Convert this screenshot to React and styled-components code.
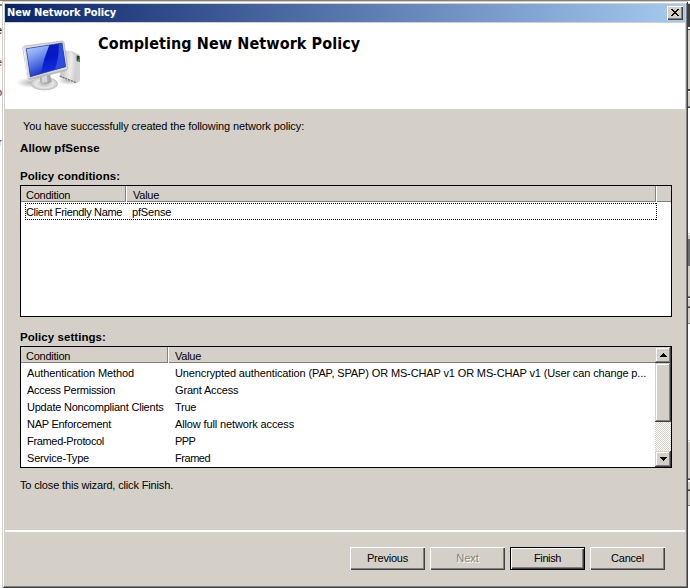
import React from 'react';
import styled, { createGlobalStyle, css } from 'styled-components';

const face = '#d4d0c8';
const shadow = '#808080';
const darkShadow = '#404040';

const GlobalStyle = createGlobalStyle`
  *, *::before, *::after { box-sizing: border-box; }
  body {
    margin: 0;
    overflow: hidden;
    font: 11px/17px 'Liberation Sans', Arial, sans-serif;
    color: #000;
  }
`;

const raised = css`
  background: ${face};
  box-shadow: inset 1px 1px 0 #fff, inset -1px -1px 0 ${darkShadow}, inset -2px -2px 0 ${shadow};
`;

const Desktop = styled.div`
  display: grid;
  grid-template-columns: 2px 686px 2px;
  width: 690px;
  height: 588px;
  border-top: 1px solid ${shadow};
  background: #fff;
`;

const LeftEdge = styled.div`
  display: flex;
  flex-direction: column;
  width: 2px;
  overflow: hidden;
  background: linear-gradient(#fff 3px, ${shadow} 3px 5px, #fff 5px);
`;

const Fragment = styled.span`
  display: flex;
  justify-content: flex-end;
  width: 2px;
  height: 17px;
  margin-top: ${(p) => p.$gap}px;
  color: ${(p) => p.$color};
`;

const RightEdge = styled.div`
  background: linear-gradient(
    #fff 2px, ${face} 2px 3px, ${darkShadow} 3px 26px, #fff 26px 28px, ${darkShadow} 28px 29px,
    ${face} 29px 88px, ${darkShadow} 88px 90px, #fff 90px 91px, ${face} 91px 105px, ${shadow} 105px 106px,
    ${darkShadow} 106px 107px, #fff 107px 232px, ${face} 232px 233px, #fff 233px 234px, ${face} 234px 238px,
    #6e6e6e 238px 265px, ${face} 265px 295px, ${shadow} 295px 296px, ${darkShadow} 296px 297px,
    #fff 297px 298px, ${face} 298px 305px, ${shadow} 305px 306px, ${darkShadow} 306px 307px,
    ${face} 307px 322px, ${shadow} 322px 323px, #fff 323px 439px, ${face} 439px 440px, #fff 440px 441px,
    ${face} 441px 477px, ${shadow} 477px 478px, ${darkShadow} 478px 479px, #fff 479px 481px,
    ${face} 481px 488px, ${shadow} 488px 489px, ${darkShadow} 489px 490px, ${face} 490px 504px,
    ${shadow} 504px 505px, #fff 505px
  );
`;

const Dialog = styled.section`
  display: flex;
  flex-direction: column;
  height: 587px;
  padding: 3px;
  background: ${face};
  box-shadow: inset 1px 1px 0 ${face}, inset -1px -1px 0 ${darkShadow},
    inset 2px 2px 0 #fff, inset -2px -2px 0 ${shadow};
`;

const TitleBar = styled.header`
  display: flex;
  align-items: center;
  justify-content: space-between;
  height: 18px;
  margin-bottom: 1px;
  padding: 0 2px;
  background: linear-gradient(90deg, #0a246a, #a6caf0);
`;

const Title = styled.h1`
  margin: 0;
  color: #fff;
  font: bold 11px/18px 'DejaVu Sans Condensed', 'DejaVu Sans', sans-serif;
  font-stretch: condensed;
  letter-spacing: -0.12px;
`;

const CloseButton = styled.button`
  ${raised}
  display: flex;
  width: 16px;
  height: 14px;
  padding: 3px 4px;
  border: 0;
`;

const Banner = styled.div`
  display: flex;
  height: 86px;
  padding: 11px 0 0 5px;
  background: #fff;
`;

const Heading = styled.h2`
  margin: 0 0 0 8px;
  font: bold 16px/19px 'DejaVu Sans Condensed', 'DejaVu Sans', sans-serif;
  font-stretch: condensed;
  letter-spacing: 0.09px;
`;

const Content = styled.main`
  display: flex;
  flex-direction: column;
  flex: 1;
  padding: 9px 13px 0 15px;
`;

const Line = styled.p`
  margin: ${(p) => p.$gap || 0}px 0 0 ${(p) => p.$indent || 0}px;
  font-weight: ${(p) => (p.$bold ? 'bold' : 'normal')};
  font-size: ${(p) => (p.$bold ? 11.5 : 11)}px;
  letter-spacing: ${(p) => p.$track || 0}px;
  white-space: nowrap;
`;

const List = styled.div`
  display: flex;
  width: 652px;
  height: ${(p) => p.$height}px;
  border: 1px solid #000;
  background: #fff;
`;

const ListBody = styled.div`
  flex: 1;
  min-width: 0;
`;

const ColumnRow = styled.div`
  display: flex;
  height: 16px;
`;

const Column = styled.div`
  width: ${(p) => p.$width}px;
  padding-left: ${(p) => p.$pad}px;
  background: ${face};
  border-bottom: 1px solid ${shadow};
  border-right: ${(p) => (p.$divider ? `1px solid ${shadow}` : '0')};
  margin-right: ${(p) => (p.$divider ? 1 : 0)}px;
  line-height: 19px;
  letter-spacing: -0.25px;
`;

const Rows = styled.div`
  padding-top: ${(p) => p.$top}px;
`;

const Row = styled.div`
  display: grid;
  grid-template-columns: ${(p) => p.$first}px 1fr;
  height: 17px;
  padding-left: 6px;
`;

const FocusedRow = styled(Row)`
  width: 632px;
  margin-left: 4px;
  padding-left: 1px;
  line-height: 18px;
  background:
    repeating-linear-gradient(90deg, #000 0 1px, transparent 1px 2px) top / 100% 1px no-repeat,
    repeating-linear-gradient(90deg, #000 0 1px, transparent 1px 2px) bottom / 100% 1px no-repeat,
    repeating-linear-gradient(#000 0 1px, transparent 1px 2px) left / 1px 100% no-repeat,
    repeating-linear-gradient(#000 0 1px, transparent 1px 2px) right / 1px 100% no-repeat;
`;

const Cell = styled.span`
  letter-spacing: ${(p) => p.$track}px;
  white-space: nowrap;
`;

const ScrollBar = styled.div`
  display: flex;
  flex-direction: column;
  justify-content: space-between;
  width: 16px;
  background: repeating-conic-gradient(#fff 0 25%, ${face} 0 50%) 0 0 / 2px 2px;
`;

const scrollBevel = css`
  background: ${face};
  box-shadow: inset -1px -1px 0 ${darkShadow}, inset 1px 1px 0 ${face},
    inset -2px -2px 0 ${shadow}, inset 2px 2px 0 #fff;
`;

const ArrowButton = styled.button`
  ${scrollBevel}
  display: flex;
  align-items: center;
  justify-content: center;
  width: 16px;
  height: 16px;
  padding: 0;
  border: 0;
`;

const Thumb = styled.div`
  ${scrollBevel}
  height: 59px;
  margin-bottom: auto;
`;

const Footer = styled.footer`
  display: flex;
  justify-content: flex-end;
  gap: 5px;
  height: 55px;
  padding: 15px 20px 0 0;
  border-top: 2px solid #fff;
`;

const Button = styled.button`
  ${raised}
  width: 75px;
  height: 23px;
  padding: 0;
  border: 0;
  font: inherit;
  line-height: 23px;
  letter-spacing: ${(p) => p.$track}px;
  color: #000;
  ${(p) => p.$default && css`
    box-shadow: inset 0 0 0 1px #000, inset 2px 2px 0 #fff, inset -2px -2px 0 ${darkShadow},
      inset -3px -3px 0 ${shadow};
  `}
  &:disabled {
    color: ${shadow};
    text-shadow: 1px 1px 0 #fff;
  }
`;

const ComputerIcon = () => (
  <svg width="80" height="66" viewBox="0 0 240 198" aria-hidden="true">
    <defs>
      <linearGradient id="screen" x1="0" y1="0" x2="0.2" y2="1">
        <stop offset="0" stopColor="#0a1fae" />
        <stop offset="0.5" stopColor="#0418c8" />
        <stop offset="1" stopColor="#1530dc" />
      </linearGradient>
      <linearGradient id="glare" x1="0" y1="0" x2="0.35" y2="1">
        <stop offset="0" stopColor="#c3d8ff" />
        <stop offset="0.4" stopColor="#7f9ff2" />
        <stop offset="1" stopColor="#1c35c8" />
      </linearGradient>
      <linearGradient id="tower" x1="0" y1="0" x2="1" y2="0.2">
        <stop offset="0" stopColor="#b0b0b0" />
        <stop offset="0.6" stopColor="#ececec" />
        <stop offset="1" stopColor="#c4c4c4" />
      </linearGradient>
      <radialGradient id="base">
        <stop offset="0" stopColor="#b5b5b5" />
        <stop offset="0.65" stopColor="#e8e8e8" />
        <stop offset="1" stopColor="#c5c5c5" />
      </radialGradient>
      <radialGradient id="ground">
        <stop offset="0" stopColor="#888" stopOpacity="0.65" />
        <stop offset="1" stopColor="#888" stopOpacity="0" />
      </radialGradient>
    </defs>
    <ellipse cx="66" cy="146" rx="48" ry="16" fill="url(#ground)" />
    <ellipse cx="176" cy="139" rx="34" ry="14" fill="url(#ground)" />
    <path d="M160 50L182 50L209 62V141L199 148L150 130Z" fill="url(#tower)" />
    <path d="M182 51L209 62V141L199 148L193 66Z" fill="#d2d2d2" />
    <path d="M200 64L209 67V84L200 81Z" fill="#303633" />
    <path d="M203 75L207 77V82L203 80Z" fill="#39bf54" />
    <path d="M149 126L198 146" stroke="#777" strokeWidth="4" strokeDasharray="7 2" />
    <ellipse cx="103" cy="149" rx="40" ry="19" fill="url(#base)" stroke="#bebebe" strokeWidth="2" />
    <path d="M89 124L119 117L126 143Q108 155 91 145Z" fill="#a9a9a9" />
    <path d="M94 125L111 121L112 144L96 146Z" fill="#d7d7d7" />
    <path d="M38 40L44 36L156 21Q161 21 162 25L173 101Q173 107 168 109L60 136Q54 137 53 131Z" fill="#d9d9d6" stroke="#aaa" strokeWidth="2" />
    <path d="M41 40L52 132" stroke="#f5f5f5" strokeWidth="3" />
    <path d="M49 44L156 27L167 98L61 128Z" fill="url(#screen)" />
    <path d="M49 44L118 33Q100 76 92 119L61 128Z" fill="url(#glare)" />
    <path d="M146 29L156 27L167 98L134 107Q148 70 146 29Z" fill="#2f4be0" />
    <path d="M49 44L156 27L167 98L61 128Z" fill="none" stroke="#2940b4" strokeWidth="2" />
    <path d="M58 133L172 104L170 110L61 137Z" fill="#bcbcbc" />
  </svg>
);

const CloseGlyph = () => (
  <svg width="8" height="7" viewBox="0 0 8 7" shapeRendering="crispEdges" aria-hidden="true">
    <path d="M0 0h2v1h1v1h2V1h1V0h2v1H7v1H6v1H5v1h1v1h1v1h1v1H6V6H5V5H3v1H2v1H0V6h1V5h1V4h1V3H2V2H1V1H0z" />
  </svg>
);

const Arrow = ({ down }) => (
  <svg width="7" height="4" viewBox="0 0 7 4" shapeRendering="crispEdges" aria-hidden="true">
    <path d={down ? 'M0 0h7v1H6v1H5v1H4v1H3V3H2V2H1V1H0z' : 'M3 0h1v1h1v1h1v1h1v1H0V3h1V2h1V1h1z'} />
  </svg>
);

const settings = [
  ['Authentication Method', -0.12, 'Unencrypted authentication (PAP, SPAP) OR MS-CHAP v1 OR MS-CHAP v1 (User can change p...', -0.13],
  ['Access Permission', -0.28, 'Grant Access', -0.17],
  ['Update Noncompliant Clients', -0.22, 'True', -0.25],
  ['NAP Enforcement', -0.26, 'Allow full network access', -0.13],
  ['Framed-Protocol', -0.33, 'PPP', -0.6],
  ['Service-Type', -0.18, 'Framed', -0.45],
];

export default function App() {
  return (
    <>
      <GlobalStyle />
      <Desktop>
        <LeftEdge>
          <Fragment $gap={21} $color="#000">e</Fragment>
          <Fragment $gap={15} $color="#7a2424">e</Fragment>
          <Fragment $gap={13} $color="#24246c">o</Fragment>
          <Fragment $gap={33} $color="#4a2878">r</Fragment>
        </LeftEdge>
        <Dialog>
          <TitleBar>
            <Title>New Network Policy</Title>
            <CloseButton aria-label="Close"><CloseGlyph /></CloseButton>
          </TitleBar>
          <Banner>
            <ComputerIcon />
            <Heading>Completing New Network Policy</Heading>
          </Banner>
          <Content>
            <Line $indent={3} $track={-0.11}>You have successfully created the following network policy:</Line>
            <Line $gap={5} $bold $track={0.08}>Allow pfSense</Line>
            <Line $gap={11} $bold $track={0.06}>Policy conditions:</Line>
            <List $height={132}>
              <ListBody>
                <ColumnRow>
                  <Column $width={105} $pad={5} $divider>Condition</Column>
                  <Column $width={529} $pad={6} $divider>Value</Column>
                  <Column $width={14} $pad={0} />
                </ColumnRow>
                <Rows $top={1}>
                  <FocusedRow $first={106}>
                    <Cell $track={-0.33}>Client Friendly Name</Cell>
                    <Cell $track={-0.15}>pfSense</Cell>
                  </FocusedRow>
                </Rows>
              </ListBody>
            </List>
            <Line $gap={12} $bold $track={0.06}>Policy settings:</Line>
            <List $height={122}>
              <ListBody>
                <ColumnRow>
                  <Column $width={147} $pad={5} $divider>Condition</Column>
                  <Column $width={486} $pad={6}>Value</Column>
                </ColumnRow>
                <Rows $top={2}>
                  {settings.map(([name, nameTrack, value, valueTrack]) => (
                    <Row key={name} $first={148}>
                      <Cell $track={nameTrack}>{name}</Cell>
                      <Cell $track={valueTrack}>{value}</Cell>
                    </Row>
                  ))}
                </Rows>
              </ListBody>
              <ScrollBar>
                <ArrowButton aria-label="Scroll up"><Arrow /></ArrowButton>
                <Thumb />
                <ArrowButton aria-label="Scroll down"><Arrow down /></ArrowButton>
              </ScrollBar>
            </List>
            <Line $gap={9} $track={-0.15}>To close this wizard, click Finish.</Line>
          </Content>
          <Footer>
            <Button $track={-0.2}>Previous</Button>
            <Button $track={0} disabled>Next</Button>
            <Button $track={-0.4} $default>Finish</Button>
            <Button $track={-0.2}>Cancel</Button>
          </Footer>
        </Dialog>
        <RightEdge />
      </Desktop>
    </>
  );
}
